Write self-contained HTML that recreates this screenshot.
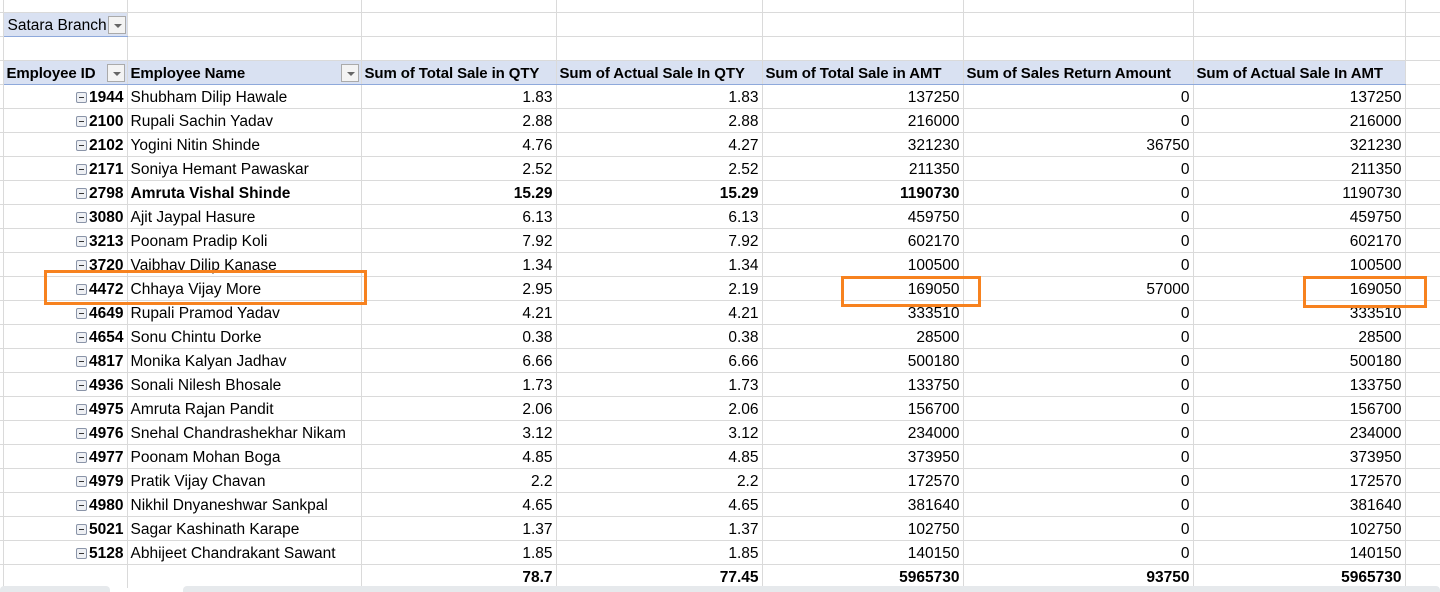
<!DOCTYPE html>
<html><head><meta charset="utf-8"><style>
*{margin:0;padding:0;box-sizing:border-box}
body{width:1440px;height:592px;overflow:hidden;background:#fff;font-family:"Liberation Sans",sans-serif;font-size:15.5px;color:#000;position:relative}
table{position:absolute;left:0;top:0;border-collapse:collapse;table-layout:fixed;width:1440px}
td{height:24px;border-right:1px solid #dadada;border-bottom:1px solid #dadada;white-space:nowrap;overflow:hidden;padding:3px 3px 0 3px;line-height:20px;position:relative}
td:first-child,td:last-child{padding:0}
td.r{text-align:right}
tr.t0 td{height:12px;padding:0}
tr.hd td{background:#d9e1f2;font-weight:bold;border-bottom:1px solid #8ea9db;font-size:15px;letter-spacing:-0.1px}
tr.hd td.e{background:#fff;border-bottom:1px solid #dadada}
tr.tot td{border-top:1px solid #4472c4;font-weight:bold;border-bottom:none}
tr.b td{font-weight:bold}
.dd{position:absolute;width:18px;height:18px;border:1px solid #aaa;background:#f3f3f3;top:3px;right:2px}
.dd:after{content:"";position:absolute;left:5px;top:7px;border-left:4px solid transparent;border-right:4px solid transparent;border-top:4px solid #666}
.mn{display:inline-block;width:11px;height:11px;border:1px solid #8a94a8;border-radius:2px;background:#eef0f4;position:relative;vertical-align:-1px;margin-right:2px}
.mn:after{content:"";position:absolute;left:2px;right:2px;top:4px;height:1px;background:#333}
.id{font-weight:bold}
.ob{position:absolute;border:3px solid #f7821f}
.sb{position:absolute;top:586px;height:6px;background:#e6e9ec;border-radius:4px 4px 0 0}
</style></head><body>
<table>
<colgroup><col style="width:3px"><col style="width:124px"><col style="width:234px"><col style="width:195px"><col style="width:206px"><col style="width:201px"><col style="width:230px"><col style="width:212px"><col style="width:35px"></colgroup>
<tr class="t0"><td></td><td></td><td></td><td></td><td></td><td></td><td></td><td></td><td></td></tr>
<tr><td></td><td style="background:#d9e1f2;border-bottom:1px solid #8ea9db;padding-left:4px">Satara Branch<span class="dd" style="right:1px"></span></td><td></td><td></td><td></td><td></td><td></td><td></td><td></td></tr>
<tr><td></td><td></td><td></td><td></td><td></td><td></td><td></td><td></td><td></td></tr>
<tr class="hd"><td class="e"></td><td>Employee ID<span class="dd"></span></td><td>Employee Name<span class="dd"></span></td><td>Sum of Total Sale in QTY</td><td>Sum of Actual Sale In QTY</td><td>Sum of Total Sale in AMT</td><td>Sum of Sales Return Amount</td><td>Sum of Actual Sale In AMT</td><td class="e"></td></tr>
<tr><td></td><td class="r"><span class="mn"></span><span class="id">1944</span></td><td>Shubham Dilip Hawale</td><td class="r">1.83</td><td class="r">1.83</td><td class="r">137250</td><td class="r">0</td><td class="r">137250</td><td></td></tr>
<tr><td></td><td class="r"><span class="mn"></span><span class="id">2100</span></td><td>Rupali Sachin Yadav</td><td class="r">2.88</td><td class="r">2.88</td><td class="r">216000</td><td class="r">0</td><td class="r">216000</td><td></td></tr>
<tr><td></td><td class="r"><span class="mn"></span><span class="id">2102</span></td><td>Yogini Nitin Shinde</td><td class="r">4.76</td><td class="r">4.27</td><td class="r">321230</td><td class="r">36750</td><td class="r">321230</td><td></td></tr>
<tr><td></td><td class="r"><span class="mn"></span><span class="id">2171</span></td><td>Soniya Hemant Pawaskar</td><td class="r">2.52</td><td class="r">2.52</td><td class="r">211350</td><td class="r">0</td><td class="r">211350</td><td></td></tr>
<tr class="b"><td></td><td class="r"><span class="mn"></span><span class="id">2798</span></td><td>Amruta Vishal Shinde</td><td class="r">15.29</td><td class="r">15.29</td><td class="r">1190730</td><td class="r" style="font-weight:normal">0</td><td class="r" style="font-weight:normal">1190730</td><td></td></tr>
<tr><td></td><td class="r"><span class="mn"></span><span class="id">3080</span></td><td>Ajit Jaypal Hasure</td><td class="r">6.13</td><td class="r">6.13</td><td class="r">459750</td><td class="r">0</td><td class="r">459750</td><td></td></tr>
<tr><td></td><td class="r"><span class="mn"></span><span class="id">3213</span></td><td>Poonam Pradip Koli</td><td class="r">7.92</td><td class="r">7.92</td><td class="r">602170</td><td class="r">0</td><td class="r">602170</td><td></td></tr>
<tr><td></td><td class="r"><span class="mn"></span><span class="id">3720</span></td><td>Vaibhav Dilip Kanase</td><td class="r">1.34</td><td class="r">1.34</td><td class="r">100500</td><td class="r">0</td><td class="r">100500</td><td></td></tr>
<tr><td></td><td class="r"><span class="mn"></span><span class="id">4472</span></td><td>Chhaya Vijay More</td><td class="r">2.95</td><td class="r">2.19</td><td class="r">169050</td><td class="r">57000</td><td class="r">169050</td><td></td></tr>
<tr><td></td><td class="r"><span class="mn"></span><span class="id">4649</span></td><td>Rupali Pramod Yadav</td><td class="r">4.21</td><td class="r">4.21</td><td class="r">333510</td><td class="r">0</td><td class="r">333510</td><td></td></tr>
<tr><td></td><td class="r"><span class="mn"></span><span class="id">4654</span></td><td>Sonu Chintu Dorke</td><td class="r">0.38</td><td class="r">0.38</td><td class="r">28500</td><td class="r">0</td><td class="r">28500</td><td></td></tr>
<tr><td></td><td class="r"><span class="mn"></span><span class="id">4817</span></td><td>Monika Kalyan Jadhav</td><td class="r">6.66</td><td class="r">6.66</td><td class="r">500180</td><td class="r">0</td><td class="r">500180</td><td></td></tr>
<tr><td></td><td class="r"><span class="mn"></span><span class="id">4936</span></td><td>Sonali Nilesh Bhosale</td><td class="r">1.73</td><td class="r">1.73</td><td class="r">133750</td><td class="r">0</td><td class="r">133750</td><td></td></tr>
<tr><td></td><td class="r"><span class="mn"></span><span class="id">4975</span></td><td>Amruta Rajan Pandit</td><td class="r">2.06</td><td class="r">2.06</td><td class="r">156700</td><td class="r">0</td><td class="r">156700</td><td></td></tr>
<tr><td></td><td class="r"><span class="mn"></span><span class="id">4976</span></td><td>Snehal Chandrashekhar Nikam</td><td class="r">3.12</td><td class="r">3.12</td><td class="r">234000</td><td class="r">0</td><td class="r">234000</td><td></td></tr>
<tr><td></td><td class="r"><span class="mn"></span><span class="id">4977</span></td><td>Poonam Mohan Boga</td><td class="r">4.85</td><td class="r">4.85</td><td class="r">373950</td><td class="r">0</td><td class="r">373950</td><td></td></tr>
<tr><td></td><td class="r"><span class="mn"></span><span class="id">4979</span></td><td>Pratik Vijay Chavan</td><td class="r">2.2</td><td class="r">2.2</td><td class="r">172570</td><td class="r">0</td><td class="r">172570</td><td></td></tr>
<tr><td></td><td class="r"><span class="mn"></span><span class="id">4980</span></td><td>Nikhil Dnyaneshwar Sankpal</td><td class="r">4.65</td><td class="r">4.65</td><td class="r">381640</td><td class="r">0</td><td class="r">381640</td><td></td></tr>
<tr><td></td><td class="r"><span class="mn"></span><span class="id">5021</span></td><td>Sagar Kashinath Karape</td><td class="r">1.37</td><td class="r">1.37</td><td class="r">102750</td><td class="r">0</td><td class="r">102750</td><td></td></tr>
<tr><td></td><td class="r"><span class="mn"></span><span class="id">5128</span></td><td>Abhijeet Chandrakant Sawant</td><td class="r">1.85</td><td class="r">1.85</td><td class="r">140150</td><td class="r">0</td><td class="r">140150</td><td></td></tr>
<tr class="tot"><td></td><td></td><td></td><td class="r">78.7</td><td class="r">77.45</td><td class="r">5965730</td><td class="r">93750</td><td class="r">5965730</td><td></td></tr>
</table>
<div class="ob" style="left:44px;top:270px;width:323px;height:35px"></div>
<div class="ob" style="left:841px;top:276px;width:140px;height:31px"></div>
<div class="ob" style="left:1303px;top:276px;width:124px;height:32px"></div>
<div class="sb" style="left:0;width:110px"></div>
<div class="sb" style="left:183px;width:1257px"></div>
</body></html>
